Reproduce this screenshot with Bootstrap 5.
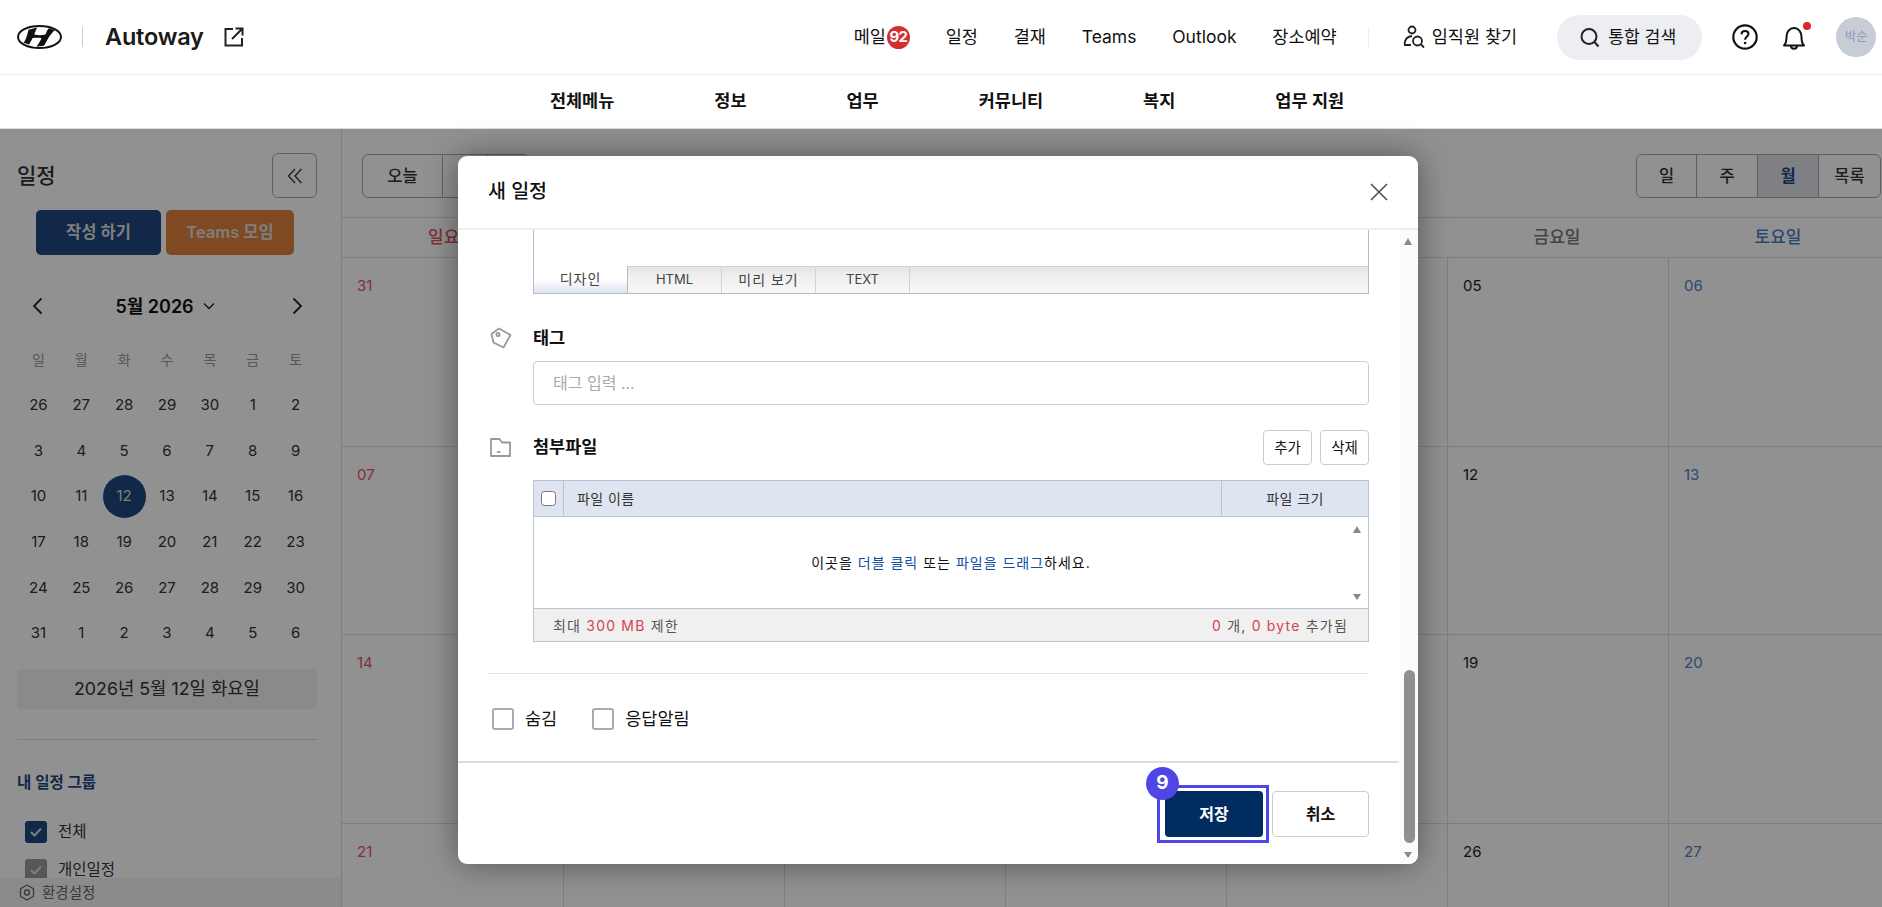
<!DOCTYPE html>
<html lang="ko">
<head>
    <meta charset="UTF-8">
    <title>새 일정</title>
    <link href="https://cdn.jsdelivr.net/npm/bootstrap@5.3.0/dist/css/bootstrap.min.css" rel="stylesheet">
    <style>
        html, body { height: 100%; overflow: hidden; }
        body {
            font-family: Inter, "Noto Sans CJK KR", sans-serif;
            color: #111;
            background: #fff;
            position: relative;
        }
        /* header */
        .top-bar { height: 75px; border-bottom: 1px solid #eee; padding-left: 17px; }
        .brand-name { font-size: 23.5px; font-weight: 600; letter-spacing: -.2px; margin-left: 22px; color: #1a1a1a; }
        .brand-sep { width: 1px; height: 20px; background: #ccd; margin-left: 20px; }
        .ext-icon { margin-left: 20px; }
        .top-links { margin-left: 610px; gap: 35.8px; font-size: 17.5px; font-weight: 400; }
        .mail-count { width: 23px; height: 23px; border-radius: 50%; background: #d32f2f; color: #fff; font-size: 15px; font-weight: 700; letter-spacing: -.6px; margin-left: 1px; }
        .top-sep { width: 1px; height: 20px; background: #eee; margin-left: 31px; }
        .people-find { font-size: 17.5px; margin-left: 34px; gap: 7px; }
        .search-pill { width: 145px; height: 45px; border-radius: 23px; background: #eceef1; gap: 8px; font-size: 17.2px; margin-left: 40px; padding-left: 23px; }
        .help-icon { margin-left: 30px; }
        .bell-wrap { margin-left: 24px; position: relative; width: 24px; height: 25px; }
        .bell-dot { position: absolute; right: -5px; top: -3px; width: 8px; height: 8px; border-radius: 50%; background: #d9282f; }
        .user-pic { width: 40px; height: 40px; border-radius: 50%; background: #c8ccd6; color: #8f97bd; font-size: 12.5px; margin-left: 30px; }
        .menu-bar { height: 54px; gap: 100px; font-size: 17.5px; font-weight: 600; padding-left: 12px; color: #111; border-bottom: 1px solid #ddd; }

        /* page behind the dialog */
        .work-area { height: calc(100% - 129px); }
        .side-panel { width: 342px; flex: none; border-right: 1px solid #ddd; }
        .side-scroll { padding: 24px 24px 0 17px; flex: 1; overflow: hidden; }
        .side-title { font-size: 21px; font-weight: 500; color: #333; }
        .fold-btn { width: 45px; height: 45px; padding: 0; border: 1px solid #aaa; border-radius: 6px; }
        .write-row { gap: 5px; margin: 12px 0 0 19px; }
        .write-btn { height: 45px; border: 0; border-radius: 5px; font-size: 16.5px; font-weight: 600; color: #ddd; padding: 0; }
        .write-new { width: 125px; background: #1f477f; }
        .write-teams { width: 128px; background: #df823c; }
        .cal-head { width: 300px; height: 32px; margin-top: 35px; padding: 0 14px 0 15px; }
        .cal-month { font-size: 18px; font-weight: 600; gap: 9px; margin-left: -5px; }
        .cal-grid { width: 300px; display: grid; grid-template-columns: repeat(7, 1fr); grid-auto-rows: 45.6px; margin-top: 15px; font-size: 15px; color: #333; }
        .cal-grid > span { display: flex; align-items: center; justify-content: center; }
        .cal-grid .dow { color: #999; font-size: 14px; }
        .cal-grid .today { color: #ddd; position: relative; z-index: 0; }
        .cal-grid .today::before { content: ""; position: absolute; z-index: -1; width: 43px; height: 43px; border-radius: 50%; background: #1f477f; }
        .date-bar { width: 300px; height: 40px; margin-top: 13px; background: #f3f3f3; border-radius: 4px; font-size: 17.8px; color: #333; }
        .side-rule { width: 300px; margin: 30px 0 0; border-top: 1px solid #ddd; opacity: 1; }
        .group-title { font-size: 15.5px; font-weight: 600; color: #1f477f; margin-top: 31px; line-height: 24px; }
        .group-item { gap: 11px; margin: 25px 0 0 8px; font-size: 15.5px; line-height: 23px; color: #333; }
        .group-item + .group-item { margin-top: 15px; }
        .tick { width: 22px; height: 22px; border-radius: 3px; background: #1f477f; flex: none; }
        .tick.off { background: #9a9a9a; }
        .side-foot { height: 29px; background: #f4f4f4; padding-left: 19px; gap: 7px; font-size: 14.5px; color: #666; flex: none; }

        .main-panel { flex: 1; min-width: 0; overflow: hidden; }
        .tool-row { height: 88px; padding: 25px 1px 0 20px; }
        .tool-btn { height: 44px; padding: 0; border: 1px solid #aaa; font-size: 16.5px; font-weight: 500; color: #333; background: #fff; border-radius: 6px; }
        .tool-w80 { width: 81px; }
        .tool-w45 { width: 46px; }
        .tool-w41 { width: 42px; }
        .tool-w60 { width: 61px; }
        .tool-w61 { width: 62px; }
        .tool-w63 { width: 63px; }
        .view-active { background: #dde1e6; color: #1f477f; font-weight: 700; }
        .week-head, .week-row { display: grid; grid-template-columns: 222px repeat(6, 221px); }
        .week-head { height: 41px; border-top: 1px solid #ddd; border-bottom: 1px solid #ddd; font-size: 17px; font-weight: 500; color: #777; text-align: center; line-height: 39px; }
        .week-head > span { padding-right: 3px; }
        .week-row { height: 188.5px; border-bottom: 1px solid #ddd; font-size: 15px; color: #222; }
        .week-row > span { padding: 17px 0 0 15px; border-right: 1px solid #ddd; }
        .week-row > span:last-child { border-right: 0; }
        .sun-col { color: #e2555c; }
        .sat-col { color: #4f81c7; }

        .page-dim { position: absolute; left: 0; right: 0; top: 129px; bottom: 0; background: rgba(0, 0, 0, .43); }

        /* dialog */
        .new-event { position: absolute; left: 458px; top: 156px; width: 960px; height: 708px; border: 0; border-radius: 9px; overflow: hidden; background: #fff; box-shadow: 0 0 32px rgba(0, 0, 0, .42); }
        .event-head { height: 74px; border-bottom: 2px solid #eee; padding: 0 29px 0 30px; flex: none; }
        .event-title { font-size: 19.5px; font-weight: 500; }
        .event-split { flex: 1; min-height: 0; }
        .event-left { width: 941px; flex: none; }
        .event-body { height: 531px; padding: 0 30px; overflow: hidden; }
        .event-track { flex: 1; background: #fbfbfb; position: relative; }
        .arrow-up, .arrow-down { position: absolute; left: 5px; width: 0; height: 0; border-left: 4.5px solid transparent; border-right: 4.5px solid transparent; }
        .arrow-up { top: 8px; border-bottom: 7px solid #888; }
        .arrow-down { bottom: 6px; border-top: 6px solid #888; }
        .track-thumb { position: absolute; left: 5px; width: 11px; top: 440px; height: 173px; border-radius: 5.5px; background: #8f8f8f; }

        .editor-box { margin-left: 45px; width: 836px; height: 64px; border: 1px solid #b4bccb; border-top: 0; display: flex; flex-direction: column; justify-content: flex-end; }
        .editor-tabs { height: 27px; border-top: 1px solid #d0d0d0; background: linear-gradient(#e5e5e5, #f0f0f0 40%, #f8f8f8); font-size: 13px; color: #444; }
        .editor-tab { width: 94px; border-right: 1px solid #d4d4d4; text-align: center; line-height: 25px; }
        .editor-tab.on { margin-top: -1px; background: linear-gradient(#fff, #fff 50%, #dde3ee); border-right: 1px solid #b4bccb; }
        .tab-ko { font-size: 14px; letter-spacing: 1px; }
        .field-label { font-size: 17.5px; font-weight: 700; color: #111; }
        .field-icon { width: 45px; flex: none; padding-left: 2px; }
        .tag-line { height: 24px; margin-top: 32px; }
        .tag-input { margin-left: 45px; width: 836px; height: 44px; margin-top: 11px; padding: 0 19px; border: 1px solid #ccc; border-radius: 4px; font-size: 16px; }
        .tag-input::placeholder { color: #aaa; }
        .file-line { height: 35px; margin-top: 25px; }
        .small-btn { width: 49px; height: 35px; padding: 0; border: 1px solid #ccc; border-radius: 4px; font-size: 14.5px; color: #111; background: #fff; }
        .file-box { margin: 15px 0 0 45px; width: 836px; height: 162px; border: 1px solid #b9c3d6; font-size: 14px; color: #333; }
        .file-head { height: 36px; background: #dfe5f0; border-bottom: 1px solid #b9c3d6; flex: none; letter-spacing: .4px; }
        .file-chk { width: 30px; border-right: 1px solid #b9c3d6; }
        .file-chk input { width: 15px; height: 15px; margin: 0; border: 1px solid #777; border-radius: 2px; }
        .file-name { flex: 1; padding-left: 13px; }
        .file-size { width: 147px; border-left: 1px solid #b9c3d6; text-align: center; }
        .file-drop { flex: 1; position: relative; color: #111; letter-spacing: 1px; }
        .file-drop a { color: #0d4ea6; text-decoration: none; }
        .file-drop .arrow-up { left: auto; right: 7px; top: 9px; }
        .file-drop .arrow-down { left: auto; right: 7px; bottom: 8px; }
        .file-foot { height: 33px; background: #f0f0f0; border-top: 1px solid #b9c3d6; padding: 0 20px 0 19px; flex: none; color: #555; letter-spacing: 1.2px; }
        .red-num { color: #d9434e; }
        .body-rule { margin: 31px 0 0; border-top: 1px solid #e4e4e4; opacity: 1; }
        .opt-row { margin-top: 33px; margin-left: 4px; gap: 35px; font-size: 17.5px; line-height: 23px; }
        .opt-row .opt-box { width: 22px; height: 22px; margin: 0 11px 0 0; border: 2px solid #aaa; border-radius: 3px; }
        .event-foot { height: 103px; border-top: 2px solid #ddd; padding: 28px 30px 0 0; gap: 9px; }
        .save-wrap { position: relative; display: block; height: 46px; }
        .save-btn { display: block; width: 98px; height: 46px; padding: 0; border: 0; border-radius: 4px; background: #002c5f; color: #fff; font-size: 16px; font-weight: 700; }
        .cancel-btn { width: 97px; height: 46px; padding: 0; border: 1px solid #ccc; border-radius: 4px; background: #fff; color: #111; font-size: 16px; font-weight: 700; }
        .mark-frame { position: absolute; inset: -6px -6px -6px -8px; border: 3px solid #4f46e5; pointer-events: none; }
        .mark-num { position: absolute; left: -19px; top: -24px; width: 33px; height: 33px; border-radius: 50%; background: #4f46e5; color: #fff; font-size: 19px; font-weight: 700; }
    </style>
</head>
<body>
    <!-- Header -->
    <div class="top-bar d-flex align-items-center">
        <svg width="45" height="24" viewBox="0 0 45 24">
            <ellipse cx="22.5" cy="12" rx="21.5" ry="11" fill="none" stroke="#111" stroke-width="2"/>
            <path d="M11.500 4.800 L20 2.400 L17.200 9.400 C21 10.400 24.500 10.400 28.500 9.400 C29.500 6.800 30.500 4.400 32 3.200 L38 5.200 C33.500 8.400 30.200 15 27 20.800 L19.500 21.800 C21.400 18.800 23.200 15.800 24.600 13.200 C21.400 12.600 18.400 12.600 15.400 13.200 C14.400 15.600 13.400 17.600 12 19.400 L6.500 17.800 C9.200 14.800 10.400 9.200 11.500 4.800 Z" fill="#111"/>
        </svg>
        <span class="brand-sep"></span>
        <span class="brand-name">Autoway</span>
        <svg class="ext-icon" width="20" height="20" viewBox="0 0 20 20" fill="none" stroke="#222" stroke-width="2">
            <path d="M9 2H1.500V18.500H18V11"/><path d="M8 12L18 2M11.500 1.500H18.500V8.500"/>
        </svg>
        <div class="top-links d-flex align-items-center">
            <span class="d-flex align-items-center">메일<span class="mail-count d-flex align-items-center justify-content-center">92</span></span>
            <span>일정</span>
            <span>결재</span>
            <span>Teams</span>
            <span>Outlook</span>
            <span>장소예약</span>
        </div>
        <span class="top-sep"></span>
        <span class="people-find d-flex align-items-center">
            <svg width="22" height="24" viewBox="0 0 22 24" fill="none" stroke="#222" stroke-width="1.800">
                <circle cx="9" cy="5" r="3.500"/><path d="M1.500 19C2 14 4 11.500 9 11M1 20H8"/><circle cx="14.500" cy="16" r="4.500"/><path d="M18 19.500L21 22.500"/>
            </svg>
            임직원 찾기
        </span>
        <span class="search-pill d-flex align-items-center">
            <svg width="20" height="21" viewBox="0 0 20 21" fill="none" stroke="#222" stroke-width="2">
                <circle cx="9" cy="9.500" r="7.500"/><path d="M14.500 15L18.500 19.500"/>
            </svg>
            통합 검색
        </span>
        <svg class="help-icon" width="26" height="26" viewBox="0 0 24 24" fill="none" stroke="#111" stroke-width="2">
            <circle cx="12" cy="12" r="10.800"/><path d="M8.800 9.500C8.800 7.500 10.300 6.500 12 6.500C13.800 6.500 15.200 7.700 15.200 9.300C15.200 11.500 12.100 11.800 12.100 14.500" stroke-width="1.900"/><circle cx="12.100" cy="17.500" r="1.200" fill="#111" stroke="none"/>
        </svg>
        <span class="bell-wrap">
            <svg width="24" height="25" viewBox="0 0 24 25" fill="none" stroke="#111" stroke-width="2">
                <path d="M2 19.500C4 17.500 4.500 15 4.500 11C4.500 6 7.500 2 12 2C16.500 2 19.500 6 19.500 11C19.500 15 20 17.500 22 19.500Z" stroke-linejoin="round"/><path d="M9 20C9 23.500 15 23.500 15 20"/>
            </svg>
            <span class="bell-dot"></span>
        </span>
        <span class="user-pic d-flex align-items-center justify-content-center">박순</span>
    </div>
    <div class="menu-bar d-flex align-items-center justify-content-center">
        <span>전체메뉴</span>
        <span>정보</span>
        <span>업무</span>
        <span>커뮤니티</span>
        <span>복지</span>
        <span>업무 지원</span>
    </div>

    <!-- Calendar page behind the dialog -->
    <div class="work-area d-flex">
        <div class="side-panel d-flex flex-column">
            <div class="side-scroll">
                <div class="d-flex justify-content-between align-items-center">
                    <span class="side-title">일정</span>
                    <button class="btn fold-btn d-flex align-items-center justify-content-center">
                        <svg width="16" height="16" viewBox="0 0 16 16" fill="none" stroke="#333" stroke-width="1.300"><path d="M8 1L1.500 8L8 15M14.500 1L8 8L14.500 15"/></svg>
                    </button>
                </div>
                <div class="write-row d-flex">
                    <button class="btn write-btn write-new">작성 하기</button>
                    <button class="btn write-btn write-teams">Teams 모임</button>
                </div>
                <div class="cal-head d-flex align-items-center justify-content-between">
                    <svg width="11" height="18" viewBox="0 0 11 18" fill="none" stroke="#222" stroke-width="1.800"><path d="M9.500 1.500L2 9L9.500 16.500"/></svg>
                    <span class="cal-month d-flex align-items-center">5월 2026
                        <svg width="12" height="8" viewBox="0 0 12 8" fill="none" stroke="#222" stroke-width="1.400"><path d="M1 1.500L6 6.500L11 1.500"/></svg>
                    </span>
                    <svg width="11" height="18" viewBox="0 0 11 18" fill="none" stroke="#222" stroke-width="1.800"><path d="M1.500 1.500L9 9L1.500 16.500"/></svg>
                </div>
                <div class="cal-grid">
                    <span class="dow">일</span><span class="dow">월</span><span class="dow">화</span><span class="dow">수</span><span class="dow">목</span><span class="dow">금</span><span class="dow">토</span>
                    <span>26</span><span>27</span><span>28</span><span>29</span><span>30</span><span>1</span><span>2</span>
                    <span>3</span><span>4</span><span>5</span><span>6</span><span>7</span><span>8</span><span>9</span>
                    <span>10</span><span>11</span><span class="today">12</span><span>13</span><span>14</span><span>15</span><span>16</span>
                    <span>17</span><span>18</span><span>19</span><span>20</span><span>21</span><span>22</span><span>23</span>
                    <span>24</span><span>25</span><span>26</span><span>27</span><span>28</span><span>29</span><span>30</span>
                    <span>31</span><span>1</span><span>2</span><span>3</span><span>4</span><span>5</span><span>6</span>
                </div>
                <div class="date-bar d-flex align-items-center justify-content-center">2026년 5월 12일 화요일</div>
                <hr class="side-rule">
                <div class="group-title">내 일정 그룹</div>
                <div class="group-item d-flex align-items-center">
                    <span class="tick d-flex align-items-center justify-content-center"><svg width="12" height="10" viewBox="0 0 12 10" fill="none" stroke="#ddd" stroke-width="2"><path d="M1 5L4.500 8.500L11 1.500"/></svg></span>전체
                </div>
                <div class="group-item d-flex align-items-center">
                    <span class="tick off d-flex align-items-center justify-content-center"><svg width="12" height="10" viewBox="0 0 12 10" fill="none" stroke="#ddd" stroke-width="2"><path d="M1 5L4.500 8.500L11 1.500"/></svg></span>개인일정
                </div>
            </div>
            <div class="side-foot d-flex align-items-center">
                <svg width="16" height="17" viewBox="0 0 16 17" fill="none" stroke="#666" stroke-width="1.300">
                    <path d="M8 1L14.500 4.700V12.300L8 16L1.500 12.300V4.700Z" stroke-linejoin="round"/><circle cx="8" cy="8.500" r="2.500"/>
                </svg>
                환경설정
            </div>
        </div>
        <div class="main-panel">
            <div class="tool-row d-flex justify-content-between">
                <div class="btn-group">
                    <button class="btn tool-btn tool-w80">오늘</button>
                    <button class="btn tool-btn tool-w45"></button>
                    <button class="btn tool-btn tool-w41"></button>
                </div>
                <div class="btn-group">
                    <button class="btn tool-btn tool-w60">일</button>
                    <button class="btn tool-btn tool-w61">주</button>
                    <button class="btn tool-btn tool-w61 view-active">월</button>
                    <button class="btn tool-btn tool-w63">목록</button>
                </div>
            </div>
            <div class="week-head">
                <span class="sun-col">일요일</span><span>월요일</span><span>화요일</span><span>수요일</span><span>목요일</span><span>금요일</span><span class="sat-col">토요일</span>
            </div>
            <div class="week-row">
                <span class="sun-col">31</span><span>01</span><span>02</span><span>03</span><span>04</span><span>05</span><span class="sat-col">06</span>
            </div>
            <div class="week-row">
                <span class="sun-col">07</span><span>08</span><span>09</span><span>10</span><span>11</span><span>12</span><span class="sat-col">13</span>
            </div>
            <div class="week-row">
                <span class="sun-col">14</span><span>15</span><span>16</span><span>17</span><span>18</span><span>19</span><span class="sat-col">20</span>
            </div>
            <div class="week-row">
                <span class="sun-col">21</span><span>22</span><span>23</span><span>24</span><span>25</span><span>26</span><span class="sat-col">27</span>
            </div>
        </div>
    </div>

    <div class="page-dim"></div>

    <!-- New event dialog -->
    <div class="modal-content new-event d-flex flex-column">
        <div class="event-head d-flex align-items-center justify-content-between">
            <span class="event-title">새 일정</span>
            <svg width="20" height="20" viewBox="0 0 20 20" fill="none" stroke="#555" stroke-width="1.700"><path d="M2 2L18 18M18 2L2 18"/></svg>
        </div>
        <div class="event-split d-flex">
            <div class="event-left">
                <div class="event-body">
                    <div class="editor-box">
                        <div class="editor-tabs d-flex">
                            <span class="editor-tab on tab-ko">디자인</span>
                            <span class="editor-tab">HTML</span>
                            <span class="editor-tab tab-ko">미리 보기</span>
                            <span class="editor-tab">TEXT</span>
                        </div>
                    </div>

                    <div class="d-flex align-items-center tag-line">
                        <span class="field-icon d-flex">
                            <svg width="22" height="22" viewBox="0 0 22 22" fill="none" stroke="#999" stroke-width="1.800" stroke-linejoin="round"><path d="M1.500 7L9 1.500L20.500 8L13.500 20.500L3.500 15.500Z"/><circle cx="8" cy="7.500" r="1.600"/></svg>
                        </span>
                        <span class="field-label">태그</span>
                    </div>
                    <input class="form-control tag-input" placeholder="태그 입력 ...">

                    <div class="d-flex align-items-center file-line">
                        <span class="field-icon d-flex">
                            <svg width="21" height="19" viewBox="0 0 21 19" fill="none" stroke="#999" stroke-width="1.800" stroke-linejoin="round"><path d="M1 1H9.500L12 4.500H20V18H1Z"/><path d="M7 14H10.500"/></svg>
                        </span>
                        <span class="field-label">첨부파일</span>
                        <span class="ms-auto d-flex gap-2">
                            <button class="btn small-btn">추가</button>
                            <button class="btn small-btn">삭제</button>
                        </span>
                    </div>

                    <div class="file-box d-flex flex-column">
                        <div class="file-head d-flex align-items-stretch">
                            <span class="file-chk d-flex align-items-center justify-content-center"><input type="checkbox" class="form-check-input"></span>
                            <span class="file-name d-flex align-items-center">파일 이름</span>
                            <span class="file-size d-flex align-items-center justify-content-center">파일 크기</span>
                        </div>
                        <div class="file-drop d-flex align-items-center justify-content-center">
                            <span>이곳을 <a href="#">더블 클릭</a> 또는 <a href="#">파일을 드래그</a>하세요.</span>
                            <i class="arrow-up"></i><i class="arrow-down"></i>
                        </div>
                        <div class="file-foot d-flex align-items-center justify-content-between">
                            <span>최대 <span class="red-num">300 MB</span> 제한</span>
                            <span><span class="red-num">0</span> 개, <span class="red-num">0 byte</span> 추가됨</span>
                        </div>
                    </div>

                    <hr class="body-rule">

                    <div class="opt-row d-flex">
                        <label class="d-flex align-items-center"><input type="checkbox" class="form-check-input opt-box">숨김</label>
                        <label class="d-flex align-items-center"><input type="checkbox" class="form-check-input opt-box">응답알림</label>
                    </div>
                </div>
                <div class="event-foot d-flex justify-content-end">
                    <span class="save-wrap">
                        <button class="btn save-btn">저장</button>
                        <span class="mark-frame"></span>
                        <span class="mark-num d-flex align-items-center justify-content-center">9</span>
                    </span>
                    <button class="btn cancel-btn">취소</button>
                </div>
            </div>
            <div class="event-track">
                <i class="arrow-up"></i>
                <span class="track-thumb"></span>
                <i class="arrow-down"></i>
            </div>
        </div>
    </div>
    <script src="https://cdn.jsdelivr.net/npm/bootstrap@5.3.0/dist/js/bootstrap.bundle.min.js"></script>
</body>
</html>
